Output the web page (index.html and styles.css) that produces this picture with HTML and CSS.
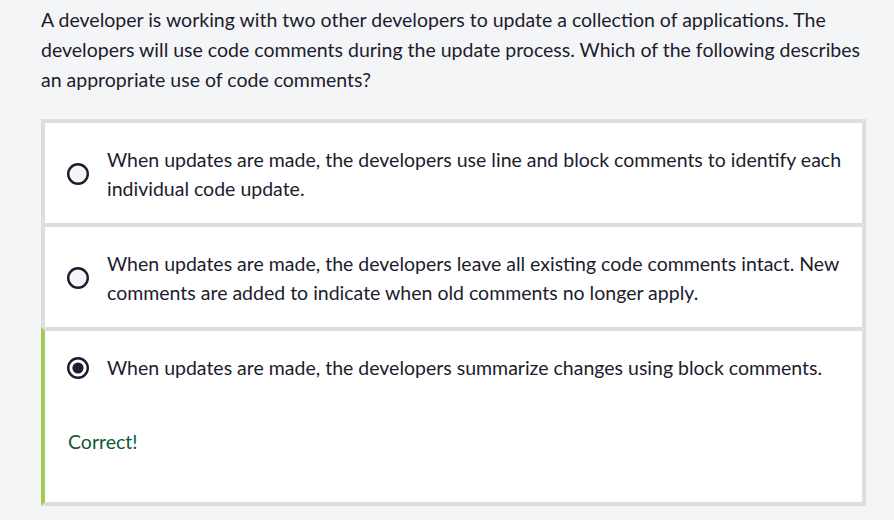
FILE: index.html
```html
<!DOCTYPE html>
<html lang="en">
<head>
<meta charset="utf-8">
<title>Quiz question</title>
<link rel="stylesheet" href="styles.css">
</head>
<body>
<main class="page">
  <p class="question">A developer is working with two other developers to update a collection of applications. The developers will use code comments during the update process. Which of the following describes an appropriate use of code comments?</p>
  <div class="options">
    <div class="option">
      <div class="choice">
        <svg class="radio" viewBox="0 0 22 22" width="22" height="22"><circle cx="11" cy="11" r="9.8" fill="#f4f5f7" stroke="#1c1c2e" stroke-width="2.4"/></svg>
        <span class="label">When updates are made, the developers use line and block comments to identify each individual code update.</span>
      </div>
    </div>
    <div class="option">
      <div class="choice">
        <svg class="radio" viewBox="0 0 22 22" width="22" height="22"><circle cx="11" cy="11" r="9.8" fill="#f4f5f7" stroke="#1c1c2e" stroke-width="2.4"/></svg>
        <span class="label">When updates are made, the developers leave all existing code comments intact. New comments are added to indicate when old comments no longer apply.</span>
      </div>
    </div>
    <div class="option option-correct">
      <div class="choice">
        <svg class="radio" viewBox="0 0 22 22" width="22" height="22"><circle cx="11" cy="11" r="9.8" fill="#ffffff" stroke="#1c1c2e" stroke-width="2.4"/><circle cx="11" cy="11" r="5.6" fill="#1c1c2e"/></svg>
        <span class="label">When updates are made, the developers summarize changes using block comments.</span>
      </div>
      <p class="feedback">Correct!</p>
    </div>
  </div>
</main>
</body>
</html>
```
FILE: styles.css
```css
html, body {
  margin: 0;
  padding: 0;
  background: #f4f5f7;
}

body {
  font-family: Lato, "Open Sans", "Liberation Sans", sans-serif;
  color: #1c1c2e;
}

.page {
  padding: 5px 28px 14px 41px;
}

.question {
  margin: 0;
  font-size: 19.5px;
  line-height: 30px;
}

.options {
  margin-top: 24px;
  display: flex;
  flex-direction: column;
}

.option {
  background: #ffffff;
  border: 4px solid #dededf;
  padding: 22px 20px 20px 22px;
}

.option + .option {
  margin-top: -4px;
}

.option-correct {
  border-left-color: #a3cc55;
  padding-bottom: 46px;
}

.choice {
  display: flex;
  align-items: center;
  gap: 18px;
}

.radio {
  flex: none;
  display: block;
}

.label {
  font-size: 19.5px;
  line-height: 29px;
}

.feedback {
  margin: 45px 0 0 1px;
  font-size: 19.5px;
  line-height: 29px;
  color: #0f5a33;
}
```
